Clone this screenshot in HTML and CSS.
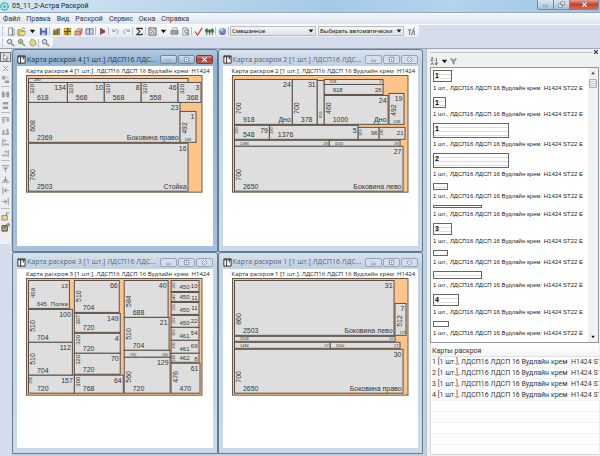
FILE: index.html
```
<!DOCTYPE html>
<html lang="ru">
<head>
    <meta charset="UTF-8">
    <meta name="viewport" content="width=device-width, initial-scale=1.0">
    <title>05_11_2-Астра Раскрой</title>
    <link rel="stylesheet" href="styles.css">
</head>
<body>

    <!-- Icons -->
    <svg class="sprite" aria-hidden="true">
        <symbol id="i-new" viewBox="0 0 10 10"><path d="M3 1h4l2 2v6H3z" fill="#fff" stroke="#889"/><path d="M7 1v8" stroke="#556"/></symbol>
        <symbol id="i-open" viewBox="0 0 10 10"><path d="M1 3h3l1 1h3v5H1z" fill="#e3cf6c" stroke="#9a8a3c"/><path d="M2 9l2-4h6L8 9z" fill="#f0e191" stroke="#9a8a3c" stroke-width=".6"/><path d="M5 2q2-2 4 0" stroke="#6b8b4b" fill="none"/></symbol>
        <symbol id="i-save" viewBox="0 0 10 10"><path d="M1 1h8v8H1z" fill="#5c62a0"/><path d="M3 1h4v3H3z" fill="#e8ebf6"/><path d="M3 6h4v3H3z" fill="#bcc2de"/></symbol>
        <symbol id="i-order" viewBox="0 0 10 10"><path d="M1 4l4-2 4-1v8H1z" fill="#a18b36"/><path d="M3 4v5M6 3v6" stroke="#50602c"/><path d="M1 2l3 2" stroke="#c7ad45"/></symbol>
        <symbol id="i-grid" viewBox="0 0 10 10"><path d="M1 1h8v8H1z" fill="#b29a37"/><path d="M1 5h8M5 1v8" stroke="#4e4a2b"/><path d="M2 2h2v2H2zM6 6h2v2H6z" fill="#e5d276"/></symbol>
        <symbol id="i-stack" viewBox="0 0 10 10"><path d="M1 5l3-3h5L7 6z" fill="#f0b39a" stroke="#b06052" stroke-width=".7"/><path d="M1 5h6v4H1zM7 5l2-3v4L7 9z" fill="#dfa38c" stroke="#a65d50" stroke-width=".7"/></symbol>
        <symbol id="i-book" viewBox="0 0 10 10"><path d="M1 2h4v6H1zM5 2h4v6H5z" fill="#e7eaf6" stroke="#62688f"/><path d="M2 4h2M6 4h2M2 6h2M6 6h2" stroke="#8d94b8" stroke-width=".6"/></symbol>
        <symbol id="i-run" viewBox="0 0 10 10"><path d="M3 1v8" stroke="#6a3a3a"/><path d="M3 1l5 3v2L3 8z" fill="#8f4646"/></symbol>
        <symbol id="i-undo" viewBox="0 0 10 10"><path d="M2 2v3h3M2 5q3-4 6-1q1 3-2 4" fill="none" stroke="#999eaa"/></symbol>
        <symbol id="i-redo" viewBox="0 0 10 10"><path d="M8 2v3H5M8 5Q5 1 2 4q-1 3 2 4" fill="none" stroke="#999eaa"/></symbol>
        <symbol id="i-sum" viewBox="0 0 10 10"><path d="M8 3V1.500H2L5.500 5 2 8.500h6V7" fill="none" stroke="#333" stroke-width="1.200"/></symbol>
        <symbol id="i-layout" viewBox="0 0 10 10"><path d="M1 1h8v8H1z" fill="#f0f0ee" stroke="#555"/><path d="M3 3l4 4M7 3L3 7" stroke="#777"/><path d="M3 1v8M7 1v8M1 3h8M1 7h8" stroke="#999" stroke-width=".5"/></symbol>
        <symbol id="i-print" viewBox="0 0 10 10"><path d="M3 1h5v3H3z" fill="#fff" stroke="#777" stroke-width=".7"/><path d="M1 4h8v4H1z" fill="#a6aab0" stroke="#666" stroke-width=".7"/><path d="M6 6h2v1H6z" fill="#3a9c4a"/></symbol>
        <symbol id="i-preview" viewBox="0 0 10 10"><path d="M2 1h5l1 1v7H2z" fill="#fff" stroke="#888"/><circle cx="6" cy="5" r="2" fill="#dfe9f2" stroke="#667"/><path d="M7 7l2 2" stroke="#556"/></symbol>
        <symbol id="i-check" viewBox="0 0 10 10"><path d="M1 5l3 4 5-8" fill="none" stroke="#b53a34" stroke-width="1.200"/></symbol>
        <symbol id="i-trees" viewBox="0 0 10 10"><path d="M0 3l2-2 2 2h2l2-2 2 2v3H0z" fill="#4b8f50"/><path d="M2 3v6M5 3v6M8 3v6" stroke="#376f3c"/></symbol>
        <symbol id="i-help" viewBox="0 0 10 10"><circle cx="5" cy="5" r="4" fill="#7689c4"/><circle cx="4" cy="3" r="2" fill="#bac7ea"/><path d="M3 8h4" stroke="#4c5c98"/></symbol>
        <symbol id="i-tools" viewBox="0 0 10 10"><path d="M1 3h4M3 3v6M8 1L5 9M8 4v5" fill="none" stroke="#777" stroke-width="1.200"/></symbol>
        <symbol id="i-zoom" viewBox="0 0 10 10"><circle cx="4" cy="4" r="2.500" fill="#d5dbe0" stroke="#666"/><path d="M6 6l3 3" stroke="#8a7a48" stroke-width="1.500"/></symbol>
        <symbol id="i-zoomin" viewBox="0 0 10 10"><circle cx="4" cy="4" r="2.500" fill="#c8d8c4" stroke="#777"/><path d="M3 4h2M4 3v2" stroke="#555" stroke-width=".6"/><path d="M6 6l3 3" stroke="#8c9350" stroke-width="1.500"/></symbol>
        <symbol id="i-hand" viewBox="0 0 10 10"><path d="M2 5l2-4 4 2 1 4-3 2-3-1z" fill="#e0d88d" stroke="#8c8850" stroke-width=".8"/></symbol>
        <symbol id="i-arrow" viewBox="0 0 10 10"><path d="M3 1v7l2-2 1 3 1-1-1-2h2z" fill="#fff" stroke="#555" stroke-width=".7"/></symbol>
        <symbol id="i-del" viewBox="0 0 10 10"><path d="M2 2l6 6M8 2L2 8" stroke="#999"/></symbol>
        <symbol id="i-shut" viewBox="0 0 10 10"><path d="M2 2l6 6M8 2L2 8" stroke="#333" stroke-width="2"/></symbol>
        <symbol id="i-rot" viewBox="0 0 10 10"><path d="M1 1h4v4H1z" fill="#a9a9a9"/><path d="M5 6h4v3H4z" fill="#999"/><path d="M6 2q2 0 2 3" stroke="#aaa" fill="none"/></symbol>
        <symbol id="i-cols" viewBox="0 0 10 10"><path d="M1 2h3v6H1zM6 2h3v6H6z" fill="#9c9c9c"/><path d="M4 5h2" stroke="#aaa"/></symbol>
        <symbol id="i-rows" viewBox="0 0 10 10"><path d="M2 1h6v3H2zM2 6h6v3H2z" fill="#9c9c9c"/></symbol>
        <symbol id="i-top" viewBox="0 0 10 10"><path d="M1 2h8" stroke="#888"/><path d="M1 3h3v5H2zM6 3h3v3H6z" fill="#aaa"/></symbol>
        <symbol id="i-bottom" viewBox="0 0 10 10"><path d="M1 8h8" stroke="#888"/><path d="M2 3h2v5H1zM6 2h2l1 6H6z" fill="#aaa"/></symbol>
        <symbol id="i-left" viewBox="0 0 10 10"><path d="M2 1v8" stroke="#888"/><path d="M3 2h3v2H3zM3 6h6v2H3z" fill="#aaa"/></symbol>
        <symbol id="i-right" viewBox="0 0 10 10"><path d="M8 1v8" stroke="#888"/><path d="M4 2h3v2H4zM1 6h6v2H1z" fill="#aaa"/></symbol>
        <symbol id="i-pushup" viewBox="0 0 10 10"><path d="M1 2h8" stroke="#888"/><path d="M2 4h6L5 7z" fill="#999"/><path d="M5 6v3" stroke="#999"/></symbol>
        <symbol id="i-pushdown" viewBox="0 0 10 10"><path d="M1 8h8" stroke="#888"/><path d="M2 7h6L5 3z" fill="#999"/><path d="M5 1v3" stroke="#999"/></symbol>
        <symbol id="i-pushleft" viewBox="0 0 10 10"><path d="M2 1v8" stroke="#888"/><path d="M3 5l3-3v6z" fill="#999"/><path d="M6 5h3" stroke="#999"/></symbol>
        <symbol id="i-pushright" viewBox="0 0 10 10"><path d="M8 1v8" stroke="#888"/><path d="M7 5L4 2v6z" fill="#999"/><path d="M1 5h3" stroke="#999"/></symbol>
        <symbol id="i-import" viewBox="0 0 10 10"><path d="M1 4h6v5H1z" fill="#e8d898" stroke="#958452"/><path d="M6 4V1h3" fill="none" stroke="#777"/></symbol>
        <symbol id="i-export" viewBox="0 0 10 10"><path d="M1 3h6v6H1z" fill="#b5a468" stroke="#504830"/><path d="M3 6l4-5h2v3" fill="none" stroke="#444"/></symbol>
        <symbol id="i-down" viewBox="0 0 10 10"><path d="M2 3h6L5 7z" fill="#111"/></symbol>
        <symbol id="i-up" viewBox="0 0 10 10"><path d="M2 7h6L5 3z" fill="#444"/></symbol>
        <symbol id="i-filter" viewBox="0 0 10 10"><path d="M1 1h2l2 4 2-4h2L6 6v3L4 8V6z" fill="#bbb" stroke="#555" stroke-width=".7"/></symbol>
        <symbol id="i-sort" viewBox="0 0 10 10"><path d="M1 1h2.500L1 4h3M1 9l1.500-3L4 9M7 1v7M5.500 6.500L7 9l1.500-2.500" fill="none" stroke="#444" stroke-width=".8"/></symbol>
        <symbol id="i-app" viewBox="0 0 10 10"><circle cx="5" cy="5" r="4" fill="#d6f0f1" stroke="#269aa6" stroke-width="1.500" stroke-dasharray="2 .6"/><path d="M5 2.500L7.500 5 5 7.500 2.500 5z" fill="#57bcc4"/></symbol>
        <symbol id="i-map" viewBox="0 0 10 10"><path d="M1 1h8v8H1z" fill="#fff" stroke="#222"/><path d="M1 2h8M4 2v7M7 2v3" stroke="#222"/></symbol>
        <symbol id="w-min" viewBox="0 0 10 10"><path d="M2 6h6v2H2z" fill="#fff" stroke="#566879" stroke-width=".7"/></symbol>
        <symbol id="w-max" viewBox="0 0 10 10"><path d="M2 2h6v6H2z" fill="#fff" stroke="#566879" stroke-width=".9"/><path d="M4.500 4.500h1v1h-1z" fill="#566879" stroke="#566879"/></symbol>
        <symbol id="w-restore" viewBox="0 0 10 10"><path d="M4 1h5v5H4zM1 4h5v5H1z" fill="#fff" stroke="#566879" stroke-width=".9"/></symbol>
        <symbol id="w-close" viewBox="0 0 10 10"><path d="M2 2l6 6M8 2L2 8" stroke="#6b7b8b" stroke-width="3"/><path d="M2 2l6 6M8 2L2 8" stroke="#fff" stroke-width="1.500"/></symbol>
    </svg>

    <header class="titlebar">
        <svg class="icon"><use href="#i-app"/></svg>
        <h1>05_11_2-Астра Раскрой</h1>
        <div class="app-buttons">
            <button aria-label="Свернуть"><svg class="glyph"><use href="#w-min"/></svg></button>
            <button aria-label="Восстановить"><svg class="glyph"><use href="#w-restore"/></svg></button>
            <button class="close" aria-label="Закрыть"><svg class="glyph"><use href="#w-close"/></svg></button>
        </div>
    </header>

    <nav class="menu">
        <a href="#">Файл</a>
        <a href="#">Правка</a>
        <a href="#">Вид</a>
        <a href="#">Раскрой</a>
        <a href="#">Сервис</a>
        <a href="#">Окна</a>
        <a href="#">Справка</a>
    </nav>

    <div class="bars">
        <div class="toolbar">
            <span class="grip"></span>
            <button aria-label="Создать"><svg class="icon"><use href="#i-new"/></svg></button>
            <button aria-label="Открыть"><svg class="icon"><use href="#i-open"/></svg></button>
            <button aria-label="Последние файлы"><svg class="icon"><use href="#i-down"/></svg></button>
            <button aria-label="Сохранить"><svg class="icon"><use href="#i-save"/></svg></button>
            <span class="sep"></span>
            <button aria-label="Заказ"><svg class="icon"><use href="#i-order"/></svg></button>
            <button aria-label="Детали"><svg class="icon"><use href="#i-grid"/></svg></button>
            <button aria-label="Материалы"><svg class="icon"><use href="#i-stack"/></svg></button>
            <button aria-label="Справочник"><svg class="icon"><use href="#i-book"/></svg></button>
            <span class="sep"></span>
            <button aria-label="Раскроить"><svg class="icon"><use href="#i-run"/></svg></button>
            <span class="sep"></span>
            <button aria-label="Отменить"><svg class="icon"><use href="#i-undo"/></svg></button>
            <button aria-label="Вернуть"><svg class="icon"><use href="#i-redo"/></svg></button>
            <span class="sep"></span>
            <button aria-label="Итоги"><svg class="icon"><use href="#i-sum"/></svg></button>
            <span class="sep"></span>
            <button aria-label="Карта"><svg class="icon"><use href="#i-layout"/></svg></button>
            <button aria-label="Выбор карты"><svg class="icon"><use href="#i-down"/></svg></button>
            <button aria-label="Печать"><svg class="icon"><use href="#i-print"/></svg></button>
            <button aria-label="Просмотр"><svg class="icon"><use href="#i-preview"/></svg></button>
            <span class="sep"></span>
            <button aria-label="Проверить"><svg class="icon"><use href="#i-check"/></svg></button>
            <button aria-label="Остатки"><svg class="icon"><use href="#i-trees"/></svg></button>
            <span class="sep"></span>
            <button aria-label="Помощь"><svg class="icon"><use href="#i-help"/></svg></button>
            <span class="sep"></span>
            <label class="combo">
                <select aria-label="Тип раскроя"><option>Смешанное</option></select>
                <svg class="icon"><use href="#i-down"/></svg>
            </label>
            <label class="combo">
                <select aria-label="Выбор листа"><option>Выбирать автоматически</option></select>
                <svg class="icon"><use href="#i-down"/></svg>
            </label>
            <button aria-label="Настройка"><svg class="icon"><use href="#i-tools"/></svg></button>
        </div>
        <div class="toolbar zoom-bar">
            <span class="grip"></span>
            <button aria-label="Увеличить"><svg class="icon"><use href="#i-zoom"/></svg></button>
            <button aria-label="Уменьшить"><svg class="icon"><use href="#i-zoomin"/></svg></button>
            <button aria-label="Рука"><svg class="icon"><use href="#i-hand"/></svg></button>
            <span class="sep"></span>
            <button aria-label="Показать всё"><svg class="icon"><use href="#i-zoom"/></svg></button>
        </div>
    </div>

    <main class="workspace">
        <div class="side-tools">
            <button class="on" aria-label="Выделение"><svg class="icon"><use href="#i-arrow"/></svg></button>
            <button aria-label="Удалить"><svg class="icon"><use href="#i-del"/></svg></button>
            <button aria-label="Повернуть"><svg class="icon"><use href="#i-rot"/></svg></button>
            <span class="line"></span>
            <button aria-label="Столбцы"><svg class="icon"><use href="#i-cols"/></svg></button>
            <button aria-label="Строки"><svg class="icon"><use href="#i-rows"/></svg></button>
            <span class="line"></span>
            <button aria-label="По верху"><svg class="icon"><use href="#i-top"/></svg></button>
            <button aria-label="По низу"><svg class="icon"><use href="#i-bottom"/></svg></button>
            <button aria-label="По левому краю"><svg class="icon"><use href="#i-left"/></svg></button>
            <button aria-label="По правому краю"><svg class="icon"><use href="#i-right"/></svg></button>
            <span class="line"></span>
            <button aria-label="Вверх"><svg class="icon"><use href="#i-pushup"/></svg></button>
            <button aria-label="Вниз"><svg class="icon"><use href="#i-pushdown"/></svg></button>
            <button aria-label="Влево"><svg class="icon"><use href="#i-pushleft"/></svg></button>
            <button aria-label="Вправо"><svg class="icon"><use href="#i-pushright"/></svg></button>
            <span class="line"></span>
            <button aria-label="Из буфера"><svg class="icon"><use href="#i-import"/></svg></button>
            <button aria-label="В буфер"><svg class="icon"><use href="#i-export"/></svg></button>
        </div>

        <!-- Окна карт раскроя, заполняются из script.js -->
        <div class="windows" id="windows"></div>

        <aside class="panel">
            <div class="panel-head">
                <span class="rule"></span>
                <button aria-label="Закрыть панель"><svg class="tiny"><use href="#i-shut"/></svg></button>
            </div>
            <div class="panel-tools">
                <button aria-label="Сортировка"><svg class="icon"><use href="#i-sort"/></svg></button>
                <button aria-label="Порядок"><svg class="icon"><use href="#i-down"/></svg></button>
                <button aria-label="Фильтр"><svg class="glyph"><use href="#i-filter"/></svg></button>
            </div>
            <div class="rest-box">
                <ul class="rests" id="rests"></ul>
                <div class="scroll">
                    <svg class="tiny"><use href="#i-up"/></svg>
                    <span class="thumb"></span>
                    <svg class="tiny end"><use href="#i-down"/></svg>
                </div>
            </div>
            <table class="cards">
                <thead><tr><th>Карты раскроя</th></tr></thead>
                <tbody id="cards"></tbody>
            </table>
        </aside>
    </main>

    <script src="script.js"></script>
</body>
</html>
```
FILE: styles.css
```
* {
    box-sizing: border-box;
}
body {
    margin: 0;
    min-height: 100vh;
    display: flex;
    flex-direction: column;
    font-family: Roboto, "Noto Sans", sans-serif;
    font-size: 7px;
    color: #333;
    background: #d5dcec;
    overflow: hidden;
}
.sprite {
    position: absolute;
    width: 0;
    height: 0;
}
button {
    display: flex;
    align-items: center;
    justify-content: center;
    padding: 0;
    border: none;
    background: none;
}
.icon {
    display: block;
    flex: none;
    width: 9px;
    height: 9px;
}
.glyph {
    display: block;
    width: 7px;
    height: 7px;
}
.tiny {
    display: block;
    width: 6px;
    height: 6px;
}

/* title bar */
.titlebar {
    display: flex;
    align-items: center;
    height: 13px;
    padding-right: 1px;
    background: linear-gradient(100deg, #d5e7f3 0%, #bcd6ea 30%, #a5c9e6 55%, #b4d3ec 75%, #9cc3e5 100%);
    border-bottom: 1px solid #94a9bc;
}
.titlebar h1 {
    flex: 1;
    margin: 0 0 0 3px;
    font-size: 7px;
    font-weight: normal;
    color: #222;
}
.app-buttons {
    display: flex;
    align-self: flex-start;
    height: 10px;
    border: 1px solid #74899d;
    border-top: none;
    border-radius: 0 0 3px 3px;
    overflow: hidden;
}
.app-buttons button {
    width: 16px;
    border-right: 1px solid #74899d;
    background: linear-gradient(#d9e6f0, #a9c0d4);
}
.app-buttons .close {
    width: 28px;
    border-right: none;
    background: linear-gradient(#e3a192, #c5412c 50%, #d06a4e);
}

/* menu */
.menu {
    display: flex;
    align-items: center;
    gap: 6px;
    height: 12px;
    padding-left: 3px;
    background: linear-gradient(#f3f6fb, #dfe5f1);
    border-bottom: 1px solid #fafbfd;
}
.menu a {
    color: #333;
    text-decoration: none;
}

/* toolbars */
.bars {
    border-bottom: 1px solid #9aa7b8;
}
.toolbar {
    display: flex;
    align-items: center;
    gap: 1px;
    width: max-content;
    height: 12px;
    padding-right: 3px;
    background: linear-gradient(#fafbfc, #e6eaf1);
    border-radius: 0 3px 3px 0;
}
.zoom-bar {
    height: 11px;
}
.grip {
    width: 3px;
    height: 8px;
    margin-right: 1px;
    border-right: 1px dotted #99a5b8;
}
.toolbar button {
    width: 10px;
    height: 10px;
}
.sep {
    width: 1px;
    height: 8px;
    background: #b8c0ce;
}
.combo {
    position: relative;
    margin-right: 1px;
}
.combo select {
    display: block;
    appearance: none;
    width: 86px;
    height: 10px;
    padding: 0 8px 0 1px;
    border: 1px solid #b9bdc4;
    border-radius: 0;
    background: linear-gradient(#f6f6f6, #dddfe2);
    font-family: inherit;
    font-size: 6px;
    line-height: 8px;
    color: #222;
}
.combo .icon {
    position: absolute;
    top: 1px;
    right: 1px;
    width: 8px;
    height: 8px;
    pointer-events: none;
}

/* workspace */
.workspace {
    flex: 1;
    display: grid;
    grid-template-columns: 12px 1fr 29%;
}
.side-tools {
    display: flex;
    flex-direction: column;
    align-items: center;
    gap: 1px;
    padding-top: 3px;
    align-self: start;
    padding-bottom: 12px;
    background: #eceef1;
    border-right: 1px solid #c5ccd8;
}
.side-tools button {
    width: 11px;
    height: 10px;
}
.side-tools .on {
    border: 1px solid #777;
    background: #dcdfe4;
}
.side-tools .line {
    width: 9px;
    height: 1px;
    margin: 1px 0;
    background: #b6bcc6;
}

/* map windows */
.windows {
    display: grid;
    grid-template-columns: 1fr 1fr;
    grid-template-rows: 1fr 1fr;
    padding: 0 3px 2px 0;
    background: #c3cfdf;
}
.win {
    display: flex;
    flex-direction: column;
    min-width: 0;
    padding: 3px 4px 5px;
    border: 1px solid #5f7c91;
    border-radius: 3px 3px 0 0;
    background: linear-gradient(#d9e4ee, #c3d3e3 12px, #cbdae9);
}
.win.active {
    background: linear-gradient(#b3cae1, #93b3d3 12px, #a5c1dd);
}
.win-title {
    display: flex;
    align-items: center;
    gap: 1px;
    height: 13px;
}
.win-title h2 {
    flex: 1;
    margin: 0;
    font-family: "Open Sans", "Noto Sans", sans-serif;
    font-size: 7px;
    font-weight: normal;
    line-height: 12px;
    color: #5b6570;
    white-space: nowrap;
}
.active .win-title h2 {
    color: #26323f;
}
.win-buttons {
    display: flex;
    gap: 1px;
}
.win-buttons button {
    width: 17px;
    height: 9px;
    border: 1px solid #93a6b8;
    border-radius: 2px;
    background: #d3dfea;
}
.active .win-buttons button {
    border-color: #6c87a3;
    background: linear-gradient(#cfdfee, #9ab6d2);
}
.active .win-buttons .close {
    border-color: #7d3a34;
    background: linear-gradient(#dc8f80, #bd3a29 50%, #cb5f48);
}
.win-body {
    flex: 1;
    padding: 1px 0 0 9px;
    background: #fff;
    overflow: hidden;
}
.caption {
    margin: 0;
    font-family: "Open Sans", "Noto Sans", sans-serif;
    font-size: 6px;
    line-height: 8px;
    color: #222;
    white-space: pre;
}
.map {
    display: block;
    width: calc(100% - 9px);
    font-family: "Liberation Sans", Arial, sans-serif;
    font-size: 7px;
}
.map text {
    fill: #333;
}
.map .medium {
    font-size: 6px;
}
.map .small {
    font-size: 4px;
}
.map .end {
    text-anchor: end;
}
.map .sheet {
    fill: #fbc489;
    stroke: #6e5a48;
}
.map .part {
    fill: #dedede;
    stroke: #5b5049;
}

/* right panel */
.panel {
    display: flex;
    flex-direction: column;
    min-width: 0;
    padding: 0 1px 1px 3px;
    background: #eff0f0;
    border-left: 1px solid #b9c2cc;
}
.panel-head {
    display: flex;
    align-items: center;
    height: 6px;
}
.rule {
    flex: 1;
    height: 1px;
    background: #c4c6c8;
}
.panel-tools {
    display: flex;
    align-items: center;
    gap: 1px;
    height: 12px;
}
.rest-box {
    display: flex;
    border: 1px solid #8f969c;
    background: #fff;
}
.rests {
    flex: 1;
    min-width: 0;
    margin: 0;
    padding: 2px 0 0 2px;
    list-style: none;
    font-family: "Liberation Sans", Arial, sans-serif;
    font-size: 6px;
    line-height: 13px;
    color: #222;
    white-space: pre;
    overflow: hidden;
}
.rests li {
    padding-bottom: 2px;
}
.rests svg {
    display: block;
}
.rests text {
    font-size: 7px;
    font-weight: bold;
}
.scroll {
    display: flex;
    flex-direction: column;
    align-items: center;
    width: 10px;
    padding: 2px 0;
    background: #f1f1f1;
}
.thumb {
    width: 8px;
    height: 9px;
    margin-top: 3px;
    border: 1px solid #aaa;
    border-radius: 1px;
    background: repeating-linear-gradient(#eee 0 1px, #ccc 1px 2px);
}
.scroll .end {
    margin-top: auto;
}
.cards {
    flex: 1;
    display: block;
    border: 1px solid #d5d7d9;
    border-width: 0 0 1px 1px;
    border-spacing: 0;
    background: #fff;
    overflow: hidden;
}
.cards thead,
.cards tbody,
.cards tr,
.cards th,
.cards td {
    display: block;
}
.cards th {
    height: 14px;
    padding: 2px 0 0 1px;
    border-bottom: 1px solid #dfe1e3;
    background: linear-gradient(#fff, #f3f4f5);
    font-weight: normal;
    line-height: 12px;
    text-align: left;
}
.cards td {
    height: 11px;
    padding: 0 0 0 1px;
    border-bottom: 1px solid #f3f3f3;
    line-height: 11px;
    white-space: pre;
}
```
FILE: script.js
```
const material = 'ЛДСП16 ЛДСП 16 Вудлайн крем  H1424';

// part: x1, y1, x2, y2, number, width, length, name, fields in small type (n, w, l)
const maps = {
    4: [
        [2, 3, 162, 7, '', '', '280', '', 'l'],
        [2, 7, 41, 27, '134', '320', '618'],
        [41, 7, 78, 27, '10', '320', '568'],
        [78, 7, 115, 27, '8', '320', '568'],
        [115, 7, 152, 27, '46', '320', '558'],
        [152, 7, 175, 27, '3', '320', '368'],
        [2, 27, 154, 67, '23', '608', '2369', 'Боковина право'],
        [154, 36, 170, 67, '1', '492', '248', '', 'l'],
        [2, 68, 162, 116, '16', '760', '2503', 'Стойка']
    ],
    2: [
        [2, 4, 60, 49, '24', '700', '918', 'Дно'],
        [60, 4, 85, 49, '31', '700', '378'],
        [85, 5, 92, 49, '', '656', '', '', 'w'],
        [92, 4, 151, 9, '2', '', '918', '', 'nl'],
        [92, 9, 151, 19, '26', '', '918'],
        [92, 20, 156, 49, '24', '460', '1000', 'Дно'],
        [157, 18, 172, 49, '19', '492', '248', '', 'l'],
        [2, 50, 37, 64, '79', '220', '548', '', 'w'],
        [37, 50, 126, 64, '5', '220', '1376', '', 'w'],
        [126, 52, 147, 64, '96', '200', '', '', 'w'],
        [147, 52, 173, 64, '21', '180', '', '', 'w'],
        [2, 65, 97, 71, '28', '', '1484', '', 'nl'],
        [97, 65, 168, 71, '28', '', '1100', '', 'nl'],
        [2, 71, 171, 116, '27', '700', '2650', 'Боковина лево']
    ],
    3: [
        [2, 2, 43, 30, '13', '459', '645', 'Полка'],
        [2, 31, 46, 64, '100', '510', '704'],
        [2, 64, 46, 97, '112', '510', '704'],
        [2, 97, 48, 115, '157', '280', '720', '', 'w'],
        [48, 2, 93, 34, '66', '510', '704'],
        [48, 35, 94, 54, '149', '307', '720'],
        [48, 55, 94, 75, '4', '320', '720'],
        [48, 75, 94, 96, '70', '320', '720'],
        [48, 97, 97, 115, '64', '300', '768'],
        [98, 2, 142, 39, '40', '584', '688'],
        [98, 39, 143, 72, '21', '510', '704'],
        [98, 72, 144, 79, '162', '', '720', '', 'nl'],
        [98, 79, 144, 115, '129', '560', '720'],
        [145, 2, 173, 13, '10', '180', '450', '', 'w'],
        [145, 14, 173, 23, '11', '140', '450', '', 'w'],
        [145, 24, 173, 36, '11', '196', '450', '', 'w'],
        [145, 37, 173, 49, '22', '196', '450', '', 'w'],
        [145, 49, 173, 62, '54', '200', '461', '', 'w'],
        [145, 62, 173, 75, '69', '200', '461', '', 'w'],
        [145, 75, 173, 84, '8', '140', '462', '', 'w'],
        [145, 85, 174, 115, '61', '476', '470']
    ],
    1: [
        [2, 2, 162, 57, '31', '860', '2503', 'Боковина лево'],
        [163, 25, 174, 57, '7', '512', '175', '', 'l'],
        [2, 58, 163, 63, '10', '', '2518', '', 'nl'],
        [2, 64, 98, 70, '27', '', '1484', '', 'nl'],
        [98, 64, 168, 70, '27', '', '1100', '', 'nl'],
        [2, 71, 171, 115, '30', '700', '2650', 'Боковина право']
    ]
};

// offcuts in the right panel: width, height, number
const rests = [
    [19, 12, '1'], [13, 11, '1'], [76, 15, '1'], [76, 15, '2'], [15, 7, ''], [49, 3, ''],
    [19, 12, '3'], [15, 6, ''], [49, 8, ''], [26, 12, '4'], [16, 6, '']
];

function label(x, y, text, cls, turned) {
    if (!text) return '';
    const turn = turned ? ` transform="rotate(-90 ${x} ${y})"` : '';
    return `<text x="${x}" y="${y}" class="${cls}"${turn}>${text}</text>`;
}

function drawPart([x1, y1, x2, y2, num, wid, len, name, small = '']) {
    const w = x2 - x1;
    const h = y2 - y1;
    // short parts and the shelf take the medium type
    const base = h < 14 || name === 'Полка' ? 'medium' : '';
    const size = key => small.includes(key) ? 'small' : base;
    const smallLen = small.includes('l');
    const lenX = smallLen ? (w < 20 ? x1 + 5 : x1 + 6) : x1 + 9;
    const numY = small.includes('n') ? y2 - 1 : y1 + 8;
    let widX = x1 + 7;
    let widY = y2 - 10;
    let widSize = size('w');
    if (small.includes('w')) {
        widX = w < 10 ? x1 + 5 : x1 + 4;
        widY = h > 30 ? y2 - 6 : y1 + 9;
    } else if (h < 22) {
        widX = x1 + 6;
        widY = y1 + 12;
        widSize = 'medium';
    } else if (w < 20) {
        widY = y2 - 8;
    }
    return `<rect class="part" x="${x1}.5" y="${y1}.5" width="${w}" height="${h}"/>`
        + label(x2 - 1, numY, num, size('n') + ' end')
        + label(widX, widY, wid, widSize, true)
        + label(lenX, smallLen ? y2 - 1 : y2 - 2, len, size('l'))
        + label(x2 - 1, y2 - 2, name, base + ' end');
}

function drawWindow(id, active) {
    return `
        <section class="win ${active ? 'active' : ''}">
            <div class="win-title">
                <svg class="icon"><use href="#i-map"/></svg>
                <h2>Карта раскроя ${id} [1 шт.] ЛДСП16 ЛДС...</h2>
                <div class="win-buttons">
                    <button aria-label="Свернуть"><svg class="glyph"><use href="#w-min"/></svg></button>
                    <button aria-label="Развернуть"><svg class="glyph"><use href="#w-max"/></svg></button>
                    <button class="close" aria-label="Закрыть"><svg class="glyph"><use href="#w-close"/></svg></button>
                </div>
            </div>
            <div class="win-body">
                <p class="caption">Карта раскроя ${id} [1 шт.]. ${material}</p>
                <svg class="map" viewBox="0 0 178 119">
                    <rect class="sheet" x=".5" y=".5" width="176" height="117"/>
                    ${maps[id].map(drawPart).join('')}
                </svg>
            </div>
        </section>`;
}

function drawRest([w, h, num]) {
    let lines = '';
    for (let y = 4; y < h - 2; y += 4) {
        lines += `<path d="M1 ${y}.5h${w - 2}" stroke="#ddd"/>`;
    }
    const text = num ? `<text x="2" y="8">${num}</text>` : '';
    return `<li><svg width="${w}" height="${h}">
        <rect x=".5" y=".5" width="${w - 1}" height="${h - 1}" fill="#fff" stroke="#666"/>${lines}
        ${text}</svg>1 шт., ${material} ST22 E</li>`;
}

document.getElementById('windows').innerHTML = [4, 2, 3, 1].map(id => drawWindow(id, id === 4)).join('');
document.getElementById('rests').innerHTML = rests.map(drawRest).join('');

let rows = '';
for (let i = 1; i <= 8; i++) {
    rows += `<tr><td>${i <= 4 ? `${i} [1 шт.], ${material} ST` : ''}</td></tr>`;
}
document.getElementById('cards').innerHTML = rows;
```
